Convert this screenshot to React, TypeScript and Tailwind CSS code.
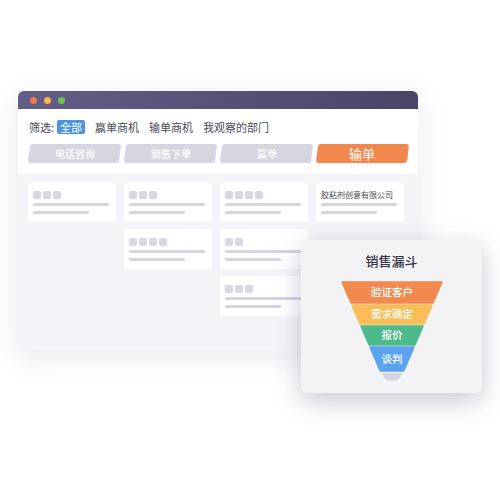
const font = { fontFamily: '"Noto Sans CJK SC", "Noto Sans", sans-serif' };

type CardProps = { dots?: number; title?: string };

function Card({ dots = 3, title }: CardProps) {
  return (
    <div className="w-[88px] h-[40px] bg-white rounded-[3px] pl-[5px] pt-[9px] flex flex-col">
      {title ? (
        <p className="text-[8px] leading-[8px] h-[8px] text-[#4a4a55] whitespace-nowrap">{title}</p>
      ) : (
        <div className="flex gap-[2px] h-[8px]">
          {Array.from({ length: dots }).map((_, i) => (
            <span key={i} className="w-[8px] h-[8px] rounded-[2px] bg-[#d8d8e4]" />
          ))}
        </div>
      )}
      <span className="mt-[4px] w-[76px] h-[3px] rounded-full bg-[#d4d4e2]" />
      <span className="mt-[5px] w-[56px] h-[3px] rounded-full bg-[#d4d4e2]" />
    </div>
  );
}

const stages = ["电话咨询", "销售下单", "赢单"];

// funnel segments: top y, bottom y, colour, label (svg coords, centre x = 52)
const segments = [
  { y1: 1, y2: 22, fill: "#f2894f", label: "验证客户" },
  { y1: 24, y2: 43, fill: "#f8bd57", label: "需求确定" },
  { y1: 45, y2: 64, fill: "#4cba8b", label: "报价" },
  { y1: 66, y2: 90, fill: "#5ba3ee", label: "谈判" },
];

const half = (y: number) => 50 - 0.43 * (y - 1);

function Funnel() {
  return (
    <svg width="104" height="102" viewBox="0 0 104 102">
      {segments.map((s, i) => {
        const a = half(s.y1);
        const b = half(s.y2);
        const pts = `${52 - a},${s.y1} ${52 + a},${s.y1} ${52 + b},${s.y2} ${52 - b},${s.y2}`;
        return (
          <g key={i}>
            <polygon points={pts} fill={s.fill} stroke={s.fill} strokeWidth="1.5" strokeLinejoin="round" />
            <text
              x="52"
              y={(s.y1 + s.y2) / 2 + 3.8}
              textAnchor="middle"
              fontSize="10.5"
              fontWeight="500"
              fill="#fff"
              style={font}
            >
              {s.label}
            </text>
          </g>
        );
      })}
      <path
        d={`M ${52 - half(92)} 92 L ${52 + half(92)} 92 L ${52 + 7} 98 Q 52 101 ${52 - 7} 98 Z`}
        fill="#d6d6e2"
      />
    </svg>
  );
}

export default function App() {
  return (
    <div className="relative w-[500px] h-[480px] bg-white pl-[18px] pt-[91px]" style={font}>
      <div className="w-[400px] rounded-[6px] bg-[#f4f4f8] shadow-[0_6px_28px_rgba(80,80,130,0.13)] overflow-hidden">
        <div className="h-[18px] bg-gradient-to-r from-[#625e88] to-[#4a4567] flex items-center gap-[7px] pl-[12px]">
          <span className="w-[7px] h-[7px] rounded-full bg-[#f27a4a]" />
          <span className="w-[7px] h-[7px] rounded-full bg-[#f6b942]" />
          <span className="w-[7px] h-[7px] rounded-full bg-[#6cbf4b]" />
        </div>

        <div className="bg-white h-[65px] pt-[11px] pl-[11px] pr-[9px]">
          <div className="flex items-center h-[14px] text-[11px] text-[#4a4a56]">
            <span>筛选:</span>
            <span className="ml-[3px] w-[28px] h-[14px] rounded-[2px] bg-[#4b93e6] text-white flex items-center justify-center">
              全部
            </span>
            <span className="ml-[10px]">赢单商机</span>
            <span className="ml-[10px]">输单商机</span>
            <span className="ml-[10px]">我观察的部门</span>
          </div>
          <div className="mt-[10px] flex gap-[5px]">
            {stages.map((s) => (
              <div
                key={s}
                className="w-[91px] h-[19px] rounded-[3px] bg-[#d6d6e2] skew-x-[-7deg] flex items-center justify-center"
              >
                <span className="skew-x-[7deg] text-[10px] font-medium text-white">{s}</span>
              </div>
            ))}
            <div className="w-[91px] h-[19px] rounded-[3px] bg-[#f3884f] skew-x-[-7deg] flex items-center justify-center">
              <span className="skew-x-[7deg] text-[13px] text-white">输单</span>
            </div>
          </div>
        </div>

        <div className="h-[177px] pt-[8px] pl-[10px] flex gap-[8px]">
          <div className="flex flex-col gap-[7px]">
            <Card />
          </div>
          <div className="flex flex-col gap-[7px]">
            <Card />
            <Card dots={4} />
          </div>
          <div className="flex flex-col gap-[7px]">
            <Card dots={4} />
            <Card dots={2} />
            <Card />
          </div>
          <div className="flex flex-col gap-[7px]">
            <Card title="胶粘剂创意有限公司" />
          </div>
        </div>
      </div>

      <div className="absolute left-[301px] top-[240px] w-[181px] h-[153px] rounded-[6px] bg-[#f3f3f6] shadow-[0_8px_26px_rgba(60,60,100,0.28)] flex flex-col items-center">
        <p className="mt-[11px] text-[13px] leading-[20px] font-medium text-[#34344a]">销售漏斗</p>
        <div className="mt-[10px]">
          <Funnel />
        </div>
      </div>
    </div>
  );
}
